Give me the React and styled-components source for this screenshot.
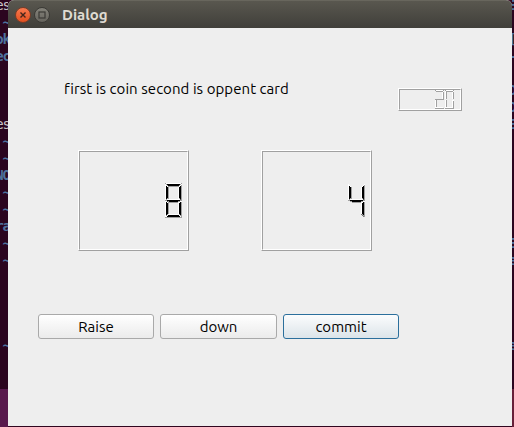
import React from 'react';
import styled, { createGlobalStyle } from 'styled-components';

const GlobalStyle = createGlobalStyle`
  * { box-sizing: border-box; }
  html, body { margin: 0; overflow: hidden; }
`;

const Desktop = styled.div`
  width: 514px;
  height: 427px;
  display: grid;
  grid-template-columns: 8px 504px 2px;
  background: #30061f;
  font-family: Ubuntu, 'Noto Sans', sans-serif;
  overflow: hidden;
`;

const Terminal = styled.div`
  height: 427px;
  overflow: hidden;
  background: linear-gradient(to bottom, #2b051f 0 389px, ${p => p.$wallpaper} 389px);
`;

const TermLine = styled.div`
  height: 17px;
  display: flex;
  justify-content: flex-end;
  margin-top: ${p => (p.$first ? '-3px' : '0')};
  margin-right: -2px;
  white-space: pre;
  font: ${p => (p.$white ? 'normal' : 'bold')} 14px/17px 'DejaVu Sans Mono', monospace;
  letter-spacing: -1px;
  color: ${p => (p.$white ? '#c9c4c8' : '#4e719d')};
`;

const Window = styled.main`
  height: 426px;
  display: flex;
  flex-direction: column;
  background: #eeeeee;
  border-radius: 6px 6px 0 0;
  overflow: hidden;
`;

const TitleBar = styled.header`
  height: 28px;
  flex: none;
  display: flex;
  align-items: center;
  gap: 3px;
  padding: 1px 0 0 7px;
  background: linear-gradient(#59574f, #403f3a);
  border-top: 1px solid #68665d;
`;

const Title = styled.h1`
  margin: 0 0 0 9px;
  font-size: 15px;
  line-height: 20px;
  font-weight: 700;
  color: #dfdbd2;
`;

const WindowButton = styled.button`
  width: 16px;
  height: 16px;
  padding: 0;
  border: 1px solid ${p => (p.$close ? '#7b3c26' : '#3b3a36')};
  border-radius: 50%;
  background: ${p => (p.$close ? 'linear-gradient(#f8794f, #e2501f)' : 'linear-gradient(#84827a, #66645d)')};
  svg { display: block; }
`;

const Content = styled.section`
  display: flex;
  flex-direction: column;
  padding: 50px 0 0 30px;
`;

const TopRow = styled.div`
  display: flex;
  justify-content: space-between;
  height: 33px;
  padding: 0 50px 0 26px;
`;

const Label = styled.p`
  margin: 0;
  font-size: 15px;
  line-height: 22px;
  letter-spacing: 0.06px;
  color: #000;
  white-space: nowrap;
`;

const LcdFrame = styled.div`
  width: ${p => p.$width}px;
  height: ${p => p.$height}px;
  margin-top: ${p => p.$top || 0}px;
  border: 1px solid;
  border-color: #fff #a0a0a0 #a0a0a0 #fff;
  display: flex;
`;

const LcdInner = styled.div`
  flex: 1;
  display: flex;
  align-items: center;
  justify-content: flex-end;
  gap: ${p => p.$gap || 0}px;
  padding-right: ${p => p.$right}px;
  border: 1px solid;
  border-color: #a0a0a0 #fff #fff #a0a0a0;
  svg { display: block; }
`;

const LcdRow = styled.div`
  display: flex;
  gap: 72px;
  padding: 0 0 0 40px;
  margin-top: 39px;
`;

const ButtonRow = styled.div`
  display: flex;
  gap: 6px;
  margin-top: 63px;
`;

const PushButton = styled.button`
  width: ${p => p.$width}px;
  height: 25px;
  padding: 0;
  border: 1px solid ${p => (p.$focused ? '#2b6f9c' : '#a9a9a9')};
  border-radius: 3px;
  background: ${p => (p.$focused ? 'linear-gradient(#fbfcfd, #dce4e9)' : 'linear-gradient(#fff, #ebebeb)')};
  font: 15px/23px Ubuntu, 'Noto Sans', sans-serif;
  color: #000;
`;

const DIGITS = { 0: [0, 1, 2, 4, 5, 6], 2: [0, 2, 3, 4, 6], 4: [1, 2, 3, 5], 8: [0, 1, 2, 3, 4, 5, 6] };

// Each segment is an origin plus edges; every edge carries its bevel shade.
function segment(id, len, w) {
  const h = Math.floor(w / 2);
  const L = '#fff';
  const D = '#a0a0a0';
  const middleBottom = w > 1
    ? [[len - w - 3, h + 1, D], [w + 2, h + 1, D]]
    : [[len - w - 1, h, D], [w, h, D]];
  return [
    { o: [0, 0], e: [[len - 1, 0, L], [len - w - 1, w, D], [w, w, D], [0, 0, D]] },
    { o: [0, 1], e: [[w, w, L], [w, len - h - 2, D], [0, len - 2, D], [0, 0, L]] },
    { o: [len - 1, 1], e: [[0, len - 2, D], [-w, len - h - 2, D], [-w, w, L], [0, 0, L]] },
    { o: [0, len], e: [[w, -h, L], [len - w - 1, -h, L], [len - 1, 0, L], ...middleBottom, [0, 0, D]] },
    { o: [0, len + 1], e: [[w, h, L], [w, len - w - 2, D], [0, len - 2, D], [0, 0, L]] },
    { o: [len - 1, len + 1], e: [[0, len - 2, D], [-w, len - w - 2, D], [-w, h, L], [0, 0, L]] },
    { o: [0, len * 2], e: [[w, -w, L], [len - w - 1, -w, L], [len - 1, 0, L], [0, 0, D]] },
  ][id];
}

function Digit({ value, length, filled }) {
  const w = Math.floor(length / 5);
  return (
    <svg width={length} height={length * 2 + 1} shapeRendering="crispEdges" aria-label={String(value)}>
      {DIGITS[value].map(id => {
        const { o, e } = segment(id, length, w);
        const pts = e.map(([x, y]) => [x + o[0] + 0.5, y + o[1] + 0.5]);
        return (
          <g key={id}>
            {filled && <polygon points={pts.map(p => p.join(',')).join(' ')} fill="#000" stroke="#000" strokeWidth="0.5" />}
            {pts.map((p, i) => {
              const q = pts[(i + pts.length - 1) % pts.length];
              return <line key={i} x1={q[0]} y1={q[1]} x2={p[0]} y2={p[1]} stroke={e[i][2]} strokeLinecap="square" />;
            })}
          </g>
        );
      })}
    </svg>
  );
}

function Lcd({ digits, width, height, length, right, filled, top, gap }) {
  return (
    <LcdFrame $width={width} $height={height} $top={top}>
      <LcdInner $right={right} $gap={gap}>
        {digits.map((d, i) => <Digit key={i} value={d} length={length} filled={filled} />)}
      </LcdInner>
    </LcdFrame>
  );
}

const LEFT = ['es', '~', 'ok', 'ec', '', '', '', 'es', '~', '~', 'NO', '~', '~', 'ra', '~', '~', '', '', '', '', '~'];
const RIGHT = ['E', '', '[', '-', '', 'D', 'D', 'E', '', '', '', '', '', '', 'E', 'e', '', '', '', '', 'e'];

function TerminalEdge({ lines, wallpaper }) {
  return (
    <Terminal $wallpaper={wallpaper}>
      {lines.map((t, i) => <TermLine key={i} $first={i === 0} $white={t === 'es'}>{t}</TermLine>)}
    </Terminal>
  );
}

export default function App() {
  return (
    <Desktop>
      <GlobalStyle />
      <TerminalEdge lines={LEFT} wallpaper="#58194d" />
      <Window>
        <TitleBar>
          <WindowButton $close aria-label="Close">
            <svg width="14" height="14"><path d="M4.5 4.5l5 5m0-5l-5 5" stroke="#43251b" strokeWidth="1.4" /></svg>
          </WindowButton>
          <WindowButton aria-label="Maximize">
            <svg width="14" height="14"><rect x="4" y="4" width="6" height="6" fill="none" stroke="#3b3a36" strokeWidth="1.2" /></svg>
          </WindowButton>
          <Title>Dialog</Title>
        </TitleBar>
        <Content>
          <TopRow>
            <Label>first is coin second is oppent card</Label>
            <Lcd digits={[2, 0]} width={64} height={23} length={9} right={6} top={10} gap={1} />
          </TopRow>
          <LcdRow>
            <Lcd digits={[8]} width={111} height={101} length={17} right={5} filled />
            <Lcd digits={[4]} width={111} height={101} length={17} right={5} filled />
          </LcdRow>
          <ButtonRow>
            <PushButton $width={116}>Raise</PushButton>
            <PushButton $width={117}>down</PushButton>
            <PushButton $width={116} $focused>commit</PushButton>
          </ButtonRow>
        </Content>
      </Window>
      <TerminalEdge lines={RIGHT} wallpaper="#672039" />
    </Desktop>
  );
}
